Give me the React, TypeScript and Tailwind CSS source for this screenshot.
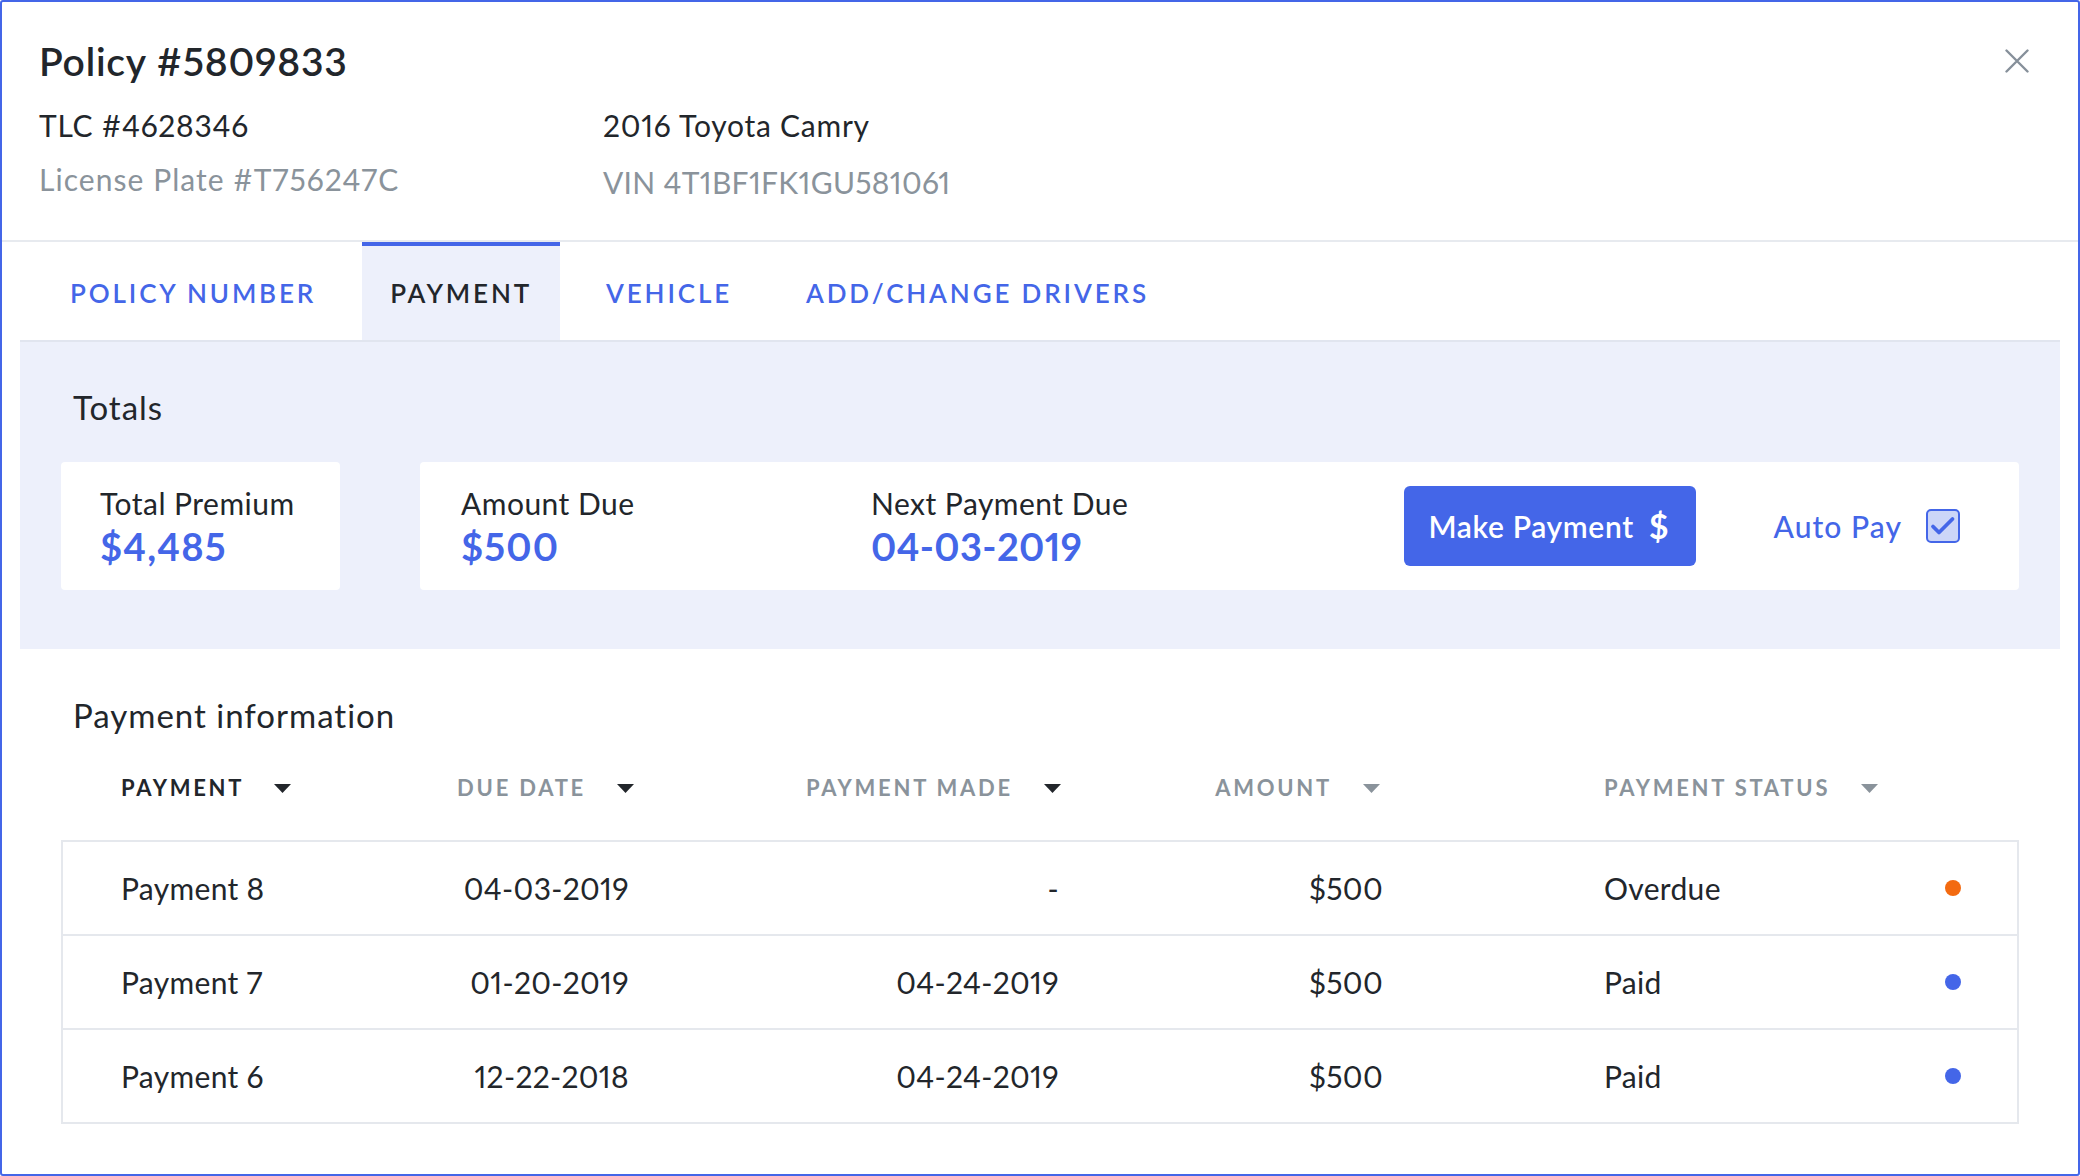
import React from "react";

const F = { fontFamily: "Lato, 'Noto Sans', sans-serif" };

function SortArrow({ dark }: { dark: boolean }) {
  return (
    <svg width="17" height="9" viewBox="0 0 17 9" className="shrink-0">
      <polygon points="0,0 17,0 8.5,9" fill={dark ? "#22262b" : "#8a939b"} />
    </svg>
  );
}

const rows = [
  { p: "Payment 8", due: "04-03-2019", made: "-", amt: "$500", status: "Overdue", dot: "bg-[#f36a10]", h: "h-[94px] border-b-2 border-[#e5e8ed]" },
  { p: "Payment 7", due: "01-20-2019", made: "04-24-2019", amt: "$500", status: "Paid", dot: "bg-[#4466e8]", h: "h-[94px] border-b-2 border-[#e5e8ed]" },
  { p: "Payment 6", due: "12-22-2018", made: "04-24-2019", amt: "$500", status: "Paid", dot: "bg-[#4466e8]", h: "h-[92px]" },
];

export default function App() {
  return (
    <div
      style={F}
      className="w-[2080px] h-[1176px] box-border border-2 border-[#4466e8] rounded-[3px] bg-white text-[#22262b] overflow-hidden proportional-nums"
    >
      {/* Header */}
      <div className="flex justify-between pl-[37px] pr-[49px] pt-[40px] pb-[43px] border-b-2 border-[#e7eaef]">
        <div>
          <h1 className="text-[39px] leading-none font-semibold tracking-[0.02em]">Policy #5809833</h1>
          <div className="flex mt-[29px] text-[30px] leading-none tracking-[0.025em]">
            <div className="w-[564px]">
              <div>TLC #4628346</div>
              <div className="mt-[24px] text-[#8a939b] tracking-[0.035em]">License Plate #T756247C</div>
            </div>
            <div>
              <div>2016 Toyota Camry</div>
              <div className="mt-[27px] text-[#8a939b] tracking-[0.01em]">VIN 4T1BF1FK1GU581061</div>
            </div>
          </div>
        </div>
        <svg width="24" height="24" viewBox="0 0 24 24" className="mt-[7px]">
          <path d="M1.5 1.5 L22.5 22.5 M22.5 1.5 L1.5 22.5" stroke="#86909a" strokeWidth="2.4" strokeLinecap="round" />
        </svg>
      </div>

      {/* Tabs */}
      <div className="flex h-[98px] pl-[40px] gap-[18px] text-[26px] font-semibold tracking-[0.11em] leading-none">
        <div className="flex items-center px-[28px] border-t-4 border-transparent text-[#4466e8]">POLICY NUMBER</div>
        <div className="flex items-center px-[28px] bg-[#edf0fb] border-t-4 border-[#4466e8] text-[#22262b]">PAYMENT</div>
        <div className="flex items-center px-[28px] border-t-4 border-transparent text-[#4466e8]">VEHICLE</div>
        <div className="flex items-center px-[28px] border-t-4 border-transparent text-[#4466e8]">ADD/CHANGE DRIVERS</div>
      </div>

      {/* Totals panel */}
      <div className="mx-[18px] border-t-2 border-[#e1e5ef] bg-[#edf0fb] px-[41px] pt-[49px] pb-[59px]">
        <div className="pl-[12px] text-[33px] leading-none tracking-[0.03em]">Totals</div>
        <div className="flex mt-[38px] gap-[80px] tracking-[0.03em]">
          <div className="w-[279px] h-[128px] bg-white rounded-[4px] flex flex-col justify-center pl-[39px] gap-[9px]">
            <div className="text-[30px] leading-none">Total Premium</div>
            <div className="text-[38px] leading-none font-bold text-[#4466e8] tracking-[0.03em]">$4,485</div>
          </div>
          <div className="flex-1 h-[128px] bg-white rounded-[4px] flex items-center pl-[41px] pr-[59px]">
            <div className="w-[410px] flex flex-col gap-[9px]">
              <div className="text-[30px] leading-none">Amount Due</div>
              <div className="text-[38px] leading-none font-bold text-[#4466e8] tracking-[0.03em]">$500</div>
            </div>
            <div className="flex-1 flex flex-col gap-[9px]">
              <div className="text-[30px] leading-none">Next Payment Due</div>
              <div className="text-[38px] leading-none font-bold text-[#4466e8] tracking-[0.01em]">04-03-2019</div>
            </div>
            <button className="w-[292px] h-[80px] rounded-[6px] bg-[#4466e8] text-white flex items-center pl-[25px] gap-[15px] tracking-[0.04em]">
              <span className="text-[30px] leading-none font-semibold">Make Payment</span>
              <span className="text-[34px] leading-none font-bold">$</span>
            </button>
            <div className="ml-[78px] text-[30px] leading-none font-medium text-[#4466e8] tracking-[0.035em]">Auto Pay</div>
            <div className="ml-[24px] w-[34px] h-[34px] rounded-[5px] border-2 border-[#4466e8] bg-[#ccd6f8] flex items-center justify-center">
              <svg width="30" height="30" viewBox="0 0 30 30">
                <path d="M5 15.5 L11 21.5 L24.5 8" fill="none" stroke="#4466e8" strokeWidth="3.8" strokeLinecap="round" strokeLinejoin="round" />
              </svg>
            </div>
          </div>
        </div>
      </div>

      {/* Payment information */}
      <div className="px-[59px] pt-[50px]">
        <div className="pl-[12px] text-[33px] leading-none tracking-[0.03em]">Payment information</div>
        <div className="flex items-center mt-[45px] text-[22px] leading-none font-bold tracking-[0.125em] text-[#8a939b]">
          <div className="w-[338px] pl-[60px] flex items-center gap-[30px] text-[#22262b]">
            PAYMENT <SortArrow dark />
          </div>
          <div className="w-[235px] flex items-center justify-end gap-[31px]">
            DUE DATE <SortArrow dark />
          </div>
          <div className="w-[427px] flex items-center justify-end gap-[31px]">
            PAYMENT MADE <SortArrow dark />
          </div>
          <div className="w-[319px] flex items-center justify-end gap-[31px]">
            AMOUNT <SortArrow dark={false} />
          </div>
          <div className="pl-[224px] flex items-center gap-[31px]">
            PAYMENT STATUS <SortArrow dark={false} />
          </div>
        </div>
        <div className="mt-[41px] border-2 border-[#e5e8ed] tracking-[0.02em]">
          {rows.map((r) => (
            <div key={r.p} className={`flex items-center text-[30px] leading-none ${r.h}`}>
              <div className="w-[337px] pl-[58px]">{r.p}</div>
              <div className="w-[229px] text-right">{r.due}</div>
              <div className="w-[430px] text-right">{r.made}</div>
              <div className="w-[324px] text-right">{r.amt}</div>
              <div className="flex-1 pl-[221px] pr-[56px] flex items-center justify-between">
                <span>{r.status}</span>
                <span className={`w-[16px] h-[16px] rounded-full ${r.dot}`} />
              </div>
            </div>
          ))}
        </div>
      </div>
    </div>
  );
}
